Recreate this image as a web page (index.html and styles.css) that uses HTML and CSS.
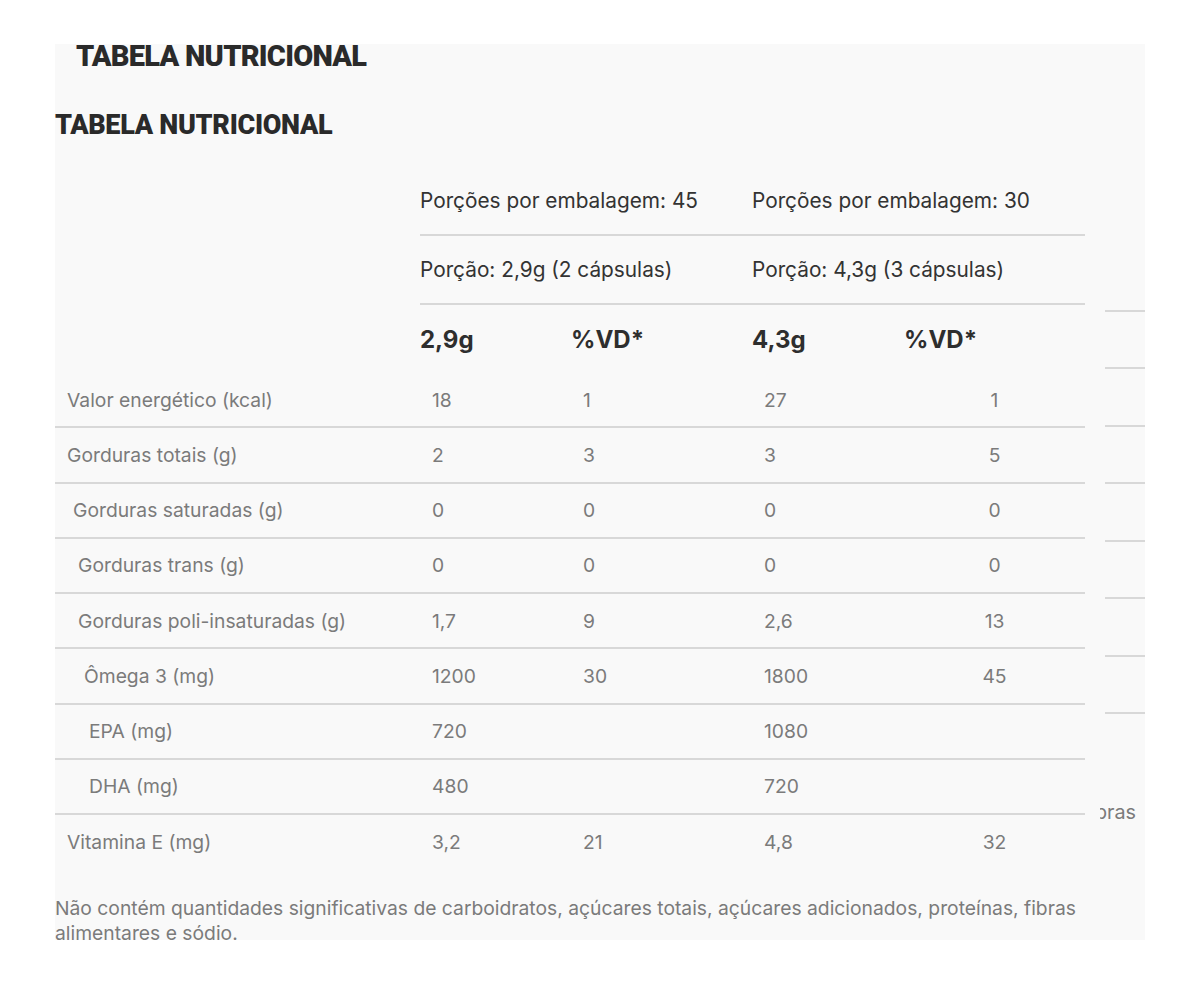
FILE: index.html
```html
<!DOCTYPE html>
<html lang="pt-BR">
<head>
<meta charset="utf-8">
<title>Tabela Nutricional</title>
<link rel="stylesheet" href="styles.css">
</head>
<body>
<div class="panel">
  <h2 class="title title-top">TABELA NUTRICIONAL</h2>
  <h2 class="title title-main">TABELA NUTRICIONAL</h2>
  <div class="content">
    <table class="nutri">
      <colgroup>
        <col class="c-label"><col class="c-a"><col class="c-b"><col class="c-c"><col class="c-d">
      </colgroup>
      <thead>
        <tr class="head-row">
          <th class="blank"></th>
          <th class="head-cell" colspan="2">Porções por embalagem: 45</th>
          <th class="head-cell" colspan="2">Porções por embalagem: 30</th>
        </tr>
        <tr class="head-row">
          <th class="blank"></th>
          <th class="head-cell" colspan="2">Porção: 2,9g (2 cápsulas)</th>
          <th class="head-cell" colspan="2">Porção: 4,3g (3 cápsulas)</th>
        </tr>
        <tr class="head-row unit-row">
          <th class="blank"></th>
          <th class="unit">2,9g</th>
          <th class="unit">%VD*</th>
          <th class="unit">4,3g</th>
          <th class="unit">%VD*</th>
        </tr>
      </thead>
      <tbody>
        <tr><td class="lbl">Valor energético (kcal)</td><td>18</td><td>1</td><td>27</td><td class="ctr">1</td></tr>
        <tr><td class="lbl">Gorduras totais (g)</td><td>2</td><td>3</td><td>3</td><td class="ctr">5</td></tr>
        <tr><td class="lbl in1">Gorduras saturadas (g)</td><td>0</td><td>0</td><td>0</td><td class="ctr">0</td></tr>
        <tr><td class="lbl in2">Gorduras trans (g)</td><td>0</td><td>0</td><td>0</td><td class="ctr">0</td></tr>
        <tr><td class="lbl in2">Gorduras poli-insaturadas (g)</td><td>1,7</td><td>9</td><td>2,6</td><td class="ctr">13</td></tr>
        <tr><td class="lbl in3">Ômega 3 (mg)</td><td>1200</td><td>30</td><td>1800</td><td class="ctr">45</td></tr>
        <tr><td class="lbl in4">EPA (mg)</td><td>720</td><td></td><td>1080</td><td class="ctr"></td></tr>
        <tr><td class="lbl in4">DHA (mg)</td><td>480</td><td></td><td>720</td><td class="ctr"></td></tr>
        <tr class="last"><td class="lbl vit">Vitamina E (mg)</td><td>3,2</td><td>21</td><td>4,8</td><td class="ctr">32</td></tr>
      </tbody>
    </table>
    <div class="ghost" aria-hidden="true">
      <div class="ghost-line"></div>
      <div class="ghost-line"></div>
      <div class="ghost-line"></div>
      <div class="ghost-line"></div>
      <div class="ghost-line"></div>
      <div class="ghost-line"></div>
      <div class="ghost-line"></div>
      <div class="ghost-line"></div>
      <div class="ghost-text"><span>fibras</span></div>
    </div>
  </div>
  <p class="note">Não contém quantidades significativas de carboidratos, açúcares totais, açúcares adicionados, proteínas, fibras alimentares e sódio.</p>
</div>
</body>
</html>
```
FILE: styles.css
```css
html, body {
  margin: 0;
  padding: 0;
  background: #ffffff;
}

body {
  font-family: "Inter", "Liberation Sans", sans-serif;
}

.panel {
  margin: 44px 0 0 55px;
  width: 1090px;
  height: 896px;
  background: #f9f9f9;
}

.title {
  margin: 0;
  font-family: "Roboto", "Liberation Sans", sans-serif;
  font-weight: 900;
  color: #2a2a2a;
  line-height: 24px;
}

.title-top {
  font-size: 29px;
  letter-spacing: -0.75px;
  padding-left: 21px;
}

.title-main {
  font-size: 27px;
  letter-spacing: -0.3px;
  margin-top: 45px;
}

.content {
  display: flex;
  margin-top: 30px;
}

.nutri {
  width: 1030px;
  flex: none;
  border-collapse: collapse;
  table-layout: fixed;
}

.c-label { width: 365px; }
.c-a { width: 151px; }
.c-b { width: 181px; }
.c-c { width: 152px; }
.c-d { width: 181px; }

.head-row th {
  height: 67px;
  padding: 0;
  text-align: left;
  vertical-align: middle;
  font-weight: 400;
}

.head-cell {
  font-size: 20.8px;
  color: #333333;
  border-bottom: 2px solid #d8d8d8;
}

.unit-row th {
  height: 68px;
}

.unit {
  font-size: 24px;
  color: #2e2e2e;
}

th.unit {
  font-weight: 700;
}

.nutri td {
  height: 53.25px;
  padding: 0 0 0 12px;
  font-size: 19.3px;
  color: #7b7b7b;
  border-bottom: 2px solid #d8d8d8;
  vertical-align: middle;
}

.nutri tr.last td {
  border-bottom: none;
}

.nutri td.ctr {
  text-align: center;
  padding-left: 0;
}

.nutri td.in1 { padding-left: 18px; }
.nutri td.in2 { padding-left: 23px; }
.nutri td.in3 { padding-left: 29px; }
.nutri td.in4 { padding-left: 34px; }

.ghost {
  width: 60px;
  flex: none;
  padding-top: 87px;
}

.ghost-line {
  height: 57.5px;
  box-sizing: border-box;
  margin-left: 20px;
  border-bottom: 2px solid #d8d8d8;
}

.ghost-text {
  display: flex;
  justify-content: flex-end;
  overflow: hidden;
  margin: 86px 9px 0 15px;
  font-size: 19.8px;
  color: #7b7b7b;
  white-space: nowrap;
}

.note {
  width: 1030px;
  margin: 28px 0 0;
  font-size: 19.3px;
  line-height: 25px;
  color: #7b7b7b;
}
```
